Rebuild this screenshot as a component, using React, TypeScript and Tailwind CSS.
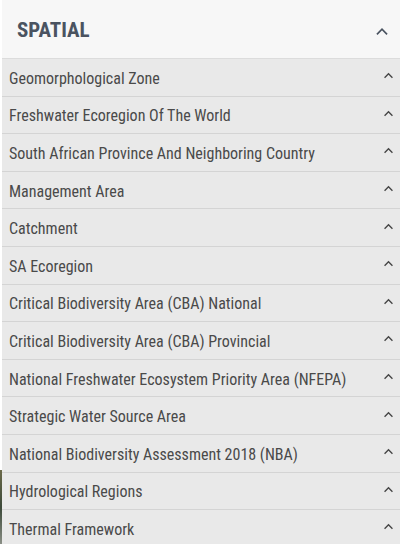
const layers = [
  "Geomorphological Zone",
  "Freshwater Ecoregion Of The World",
  "South African Province And Neighboring Country",
  "Management Area",
  "Catchment",
  "SA Ecoregion",
  "Critical Biodiversity Area (CBA) National",
  "Critical Biodiversity Area (CBA) Provincial",
  "National Freshwater Ecosystem Priority Area (NFEPA)",
  "Strategic Water Source Area",
  "National Biodiversity Assessment 2018 (NBA)",
  "Hydrological Regions",
  "Thermal Framework",
];

function Chevron({ className }: { className: string }) {
  return (
    <svg viewBox="0 0 12 8" fill="none" className={className}>
      <path d="M1.5 6.5 6 2l4.5 4.5" stroke="currentColor" strokeWidth="1.5" />
    </svg>
  );
}

export default function App() {
  return (
    <div className="flex h-[544px] w-[400px] overflow-hidden bg-white font-['Roboto',sans-serif] font-stretch-condensed">
      <div className="flex w-[2px] shrink-0 flex-col">
        <div className="flex-1 bg-white" />
        <div className="h-[74px] bg-gradient-to-b from-[#6b6a4a] via-[#3d4a3a] to-[#8a8f86]" />
      </div>
      <div className="flex-1">
        <div className="flex h-[59px] items-center justify-between border-b border-[#dcdcdc] bg-[#f7f7f7] pl-[15px] pr-[11px] pt-[4px]">
          <span className="text-[21px] font-bold text-[#4a5360]">SPATIAL</span>
          <Chevron className="h-[9px] w-[14px] text-[#4a5360]" />
        </div>
        {layers.map((name) => (
          <div
            key={name}
            className="flex h-[37.6px] items-center justify-between border-b border-[#d4d4d4] bg-[#e9e9e9] pl-[7px] pr-[6px] pt-[3px]"
          >
            <span className="text-[16px] text-[#4a4a4a]">{name}</span>
            <Chevron className="mb-[6px] h-[7px] w-[11px] text-[#444]" />
          </div>
        ))}
      </div>
    </div>
  );
}
